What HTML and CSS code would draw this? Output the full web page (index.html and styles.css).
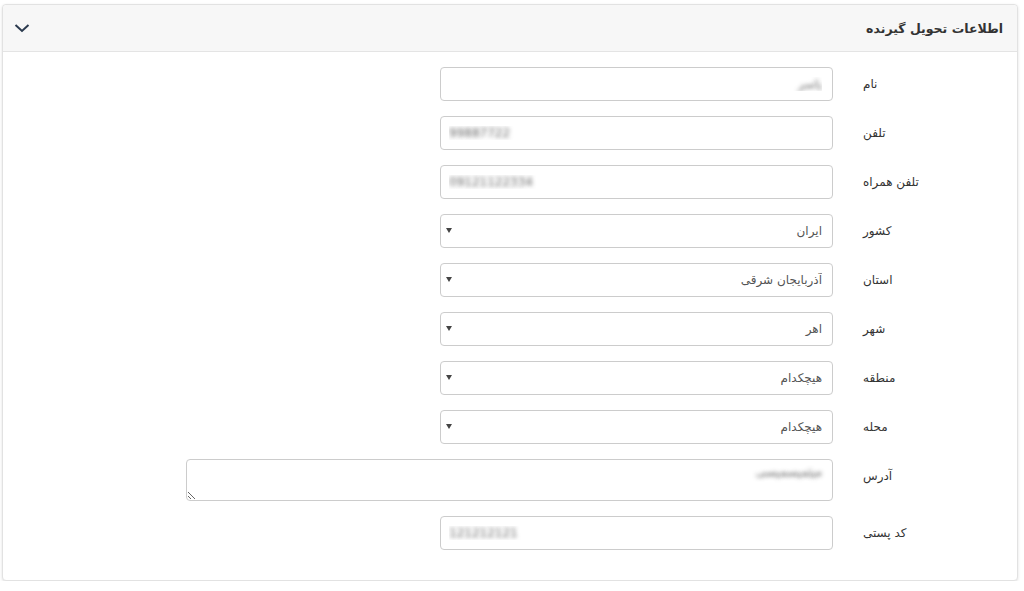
FILE: index.html
```html
<!DOCTYPE html>
<html lang="fa" dir="rtl">
<head>
<meta charset="utf-8">
<title>اطلاعات تحویل گیرنده</title>
<link rel="stylesheet" href="styles.css">
</head>
<body>
<section class="card">
  <header class="card-head">
    <h2 class="card-title">اطلاعات تحویل گیرنده</h2>
    <svg class="chev" width="16" height="10" viewBox="0 0 16 10"><polyline points="1.5,2 8,8 14.5,2" fill="none" stroke="#2b3a4e" stroke-width="2"/></svg>
  </header>
  <form class="card-body">
    <div class="row"><label class="lbl">نام</label><div class="field"><input class="ctl blur" type="text" value="یاسر"></div></div>
    <div class="row"><label class="lbl">تلفن</label><div class="field"><input class="ctl blur ltr" type="text" value="99887722"></div></div>
    <div class="row"><label class="lbl">تلفن همراه</label><div class="field"><input class="ctl blur ltr" type="text" value="09121122334"></div></div>
    <div class="row"><label class="lbl">کشور</label><div class="field"><div class="sel"><select class="ctl"><option>ایران</option></select></div></div></div>
    <div class="row"><label class="lbl">استان</label><div class="field"><div class="sel"><select class="ctl"><option>آذربایجان شرقی</option></select></div></div></div>
    <div class="row"><label class="lbl">شهر</label><div class="field"><div class="sel"><select class="ctl"><option>اهر</option></select></div></div></div>
    <div class="row"><label class="lbl">منطقه</label><div class="field"><div class="sel"><select class="ctl"><option>هیچکدام</option></select></div></div></div>
    <div class="row"><label class="lbl">محله</label><div class="field"><div class="sel"><select class="ctl"><option>هیچکدام</option></select></div></div></div>
    <div class="row"><label class="lbl">آدرس</label><div class="field"><textarea class="ctl area blur">میثمیسمیسی</textarea></div></div>
    <div class="row"><label class="lbl">کد پستی</label><div class="field"><input class="ctl blur ltr" type="text" value="121212121"></div></div>
  </form>
</section>
</body>
</html>
```
FILE: styles.css
```css
* { box-sizing: border-box; }
html, body { margin: 0; padding: 0; background: #fff; }
body {
  font-family: "DejaVu Sans", "Noto Sans", sans-serif;
  font-size: 12px;
  color: #333;
  padding: 4px 6px 0 2px;
}
.card {
  border: 1px solid #e2e2e2;
  border-radius: 4px;
  box-shadow: 0 1px 3px rgba(0,0,0,0.12);
  background: #fff;
  height: 577px;
}
.card-head {
  height: 47px;
  background: #f7f7f7;
  border-bottom: 1px solid #e4e4e4;
  border-radius: 4px 4px 0 0;
  display: flex;
  align-items: center;
  justify-content: space-between;
  padding: 0 14px 0 11px;
}
.card-title {
  margin: 0;
  font-size: 12.5px;
  font-weight: bold;
  color: #333;
}
.chev { display: block; }
.card-body {
  padding: 15px 0 0 0;
  display: flex;
  flex-direction: column;
  gap: 15px;
}
.row {
  display: flex;
  align-items: flex-start;
}
.lbl {
  width: 169px;
  padding-left: 15px;
  text-align: left;
  color: #333;
  font-size: 12px;
  line-height: 34px;
}
.field { padding-right: 15px; }
.ctl {
  display: block;
  width: 393px;
  height: 34px;
  border: 1px solid #ccc;
  border-radius: 4px;
  background: #fff;
  padding: 0 10px;
  font-family: "DejaVu Sans", "Noto Sans", sans-serif;
  font-size: 12px;
  color: #555;
  outline: none;
  direction: rtl;
}
.blur {
  color: transparent;
  text-shadow: 0 0 4px rgba(80,80,80,0.85);
}
.ltr { direction: ltr; text-align: left; padding-left: 8px; }
.sel { position: relative; width: 393px; }
select.ctl { appearance: none; -webkit-appearance: none; }
.sel::after {
  content: "";
  position: absolute;
  left: 6px;
  top: 14px;
  border-left: 3px solid transparent;
  border-right: 3px solid transparent;
  border-top: 5px solid #444;
  pointer-events: none;
}
.area {
  width: 647px;
  height: 42px;
  padding: 4px 10px;
  resize: both;
  line-height: 16px;
}
```
